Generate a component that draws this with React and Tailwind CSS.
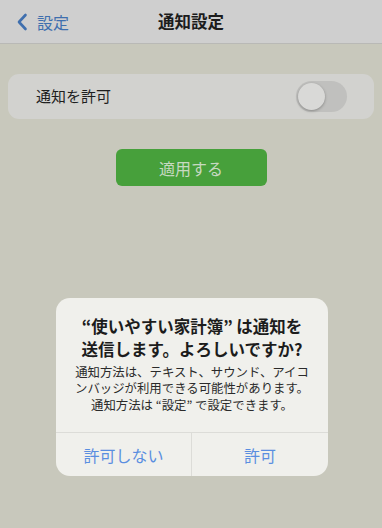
import React, { useState } from 'react';

export default function App() {
  const [enabled, setEnabled] = useState(false);

  return (
    <div
      className="relative w-[382px] h-[528px] bg-[#c8c8bc] overflow-hidden"
      style={{ fontFamily: '"Noto Sans CJK JP", "Noto Sans", sans-serif' }}
    >
      {/* header */}
      <div className="relative h-[44px] bg-[#cfcfcf] border-b border-[#b9b9b6] flex items-center justify-center">
        <button className="absolute left-[16px] top-0 h-[43px] flex items-center gap-[9px] text-[#3f6fae]">
          <svg width="12" height="18" viewBox="0 0 12 18" fill="none">
            <path d="M9.5 2 L3 9 L9.5 16" stroke="currentColor" strokeWidth="2.6" strokeLinecap="round" strokeLinejoin="round" />
          </svg>
          <span className="text-[16px] leading-none">設定</span>
        </button>
        <h1 className="text-[16.5px] font-bold text-[#1c1c1c] leading-none">通知設定</h1>
      </div>

      <div className="px-[8px] pt-[30px]">
        <div className="h-[45px] rounded-[11px] bg-[#d2d2cf] flex items-center justify-between pl-[28px] pr-[27px]">
          <span className="text-[15px] text-[#1e1e1e]">通知を許可</span>
          <button
            onClick={() => setEnabled(!enabled)}
            className="w-[51px] h-[31px] rounded-full bg-[#c0c0be] p-[2px] flex items-center"
          >
            <span className="w-[27px] h-[27px] rounded-full bg-[#d9d9d7] shadow-[0_1px_3px_rgba(0,0,0,0.3)]" />
          </button>
        </div>

        <div className="flex justify-center pt-[30px]">
          <button className="w-[151px] h-[37px] rounded-[6px] bg-[#47a03b] text-[#c7d9c1] text-[16px]">
            適用する
          </button>
        </div>
      </div>

      {/* alert */}
      <div className="absolute inset-0 flex items-end justify-center pb-[52px] pl-[2px]">
        <div className="w-[272px] rounded-[14px] bg-[#f0f0ec] overflow-hidden">
          <div className="px-[12px] pt-[17px] pb-[19px] text-center">
            <p className="text-[16.5px] font-bold leading-[23px] text-[#1c1c1c] whitespace-nowrap">
              “使いやすい家計簿” は通知を<br />送信します。よろしいですか?
            </p>
            <p className="mt-[3px] text-[12.4px] leading-[16.5px] text-[#2a2a2a] whitespace-nowrap">
              通知方法は、テキスト、サウンド、アイコ<br />ンバッジが利用できる可能性があります。<br />通知方法は “設定” で設定できます。
            </p>
          </div>
          <div className="grid grid-cols-2 border-t border-[#dcdcd8] h-[44px]">
            <button className="text-[16px] text-[#5a8ee0] border-r border-[#dcdcd8]">許可しない</button>
            <button className="text-[16px] text-[#5a8ee0]">許可</button>
          </div>
        </div>
      </div>
    </div>
  );
}
